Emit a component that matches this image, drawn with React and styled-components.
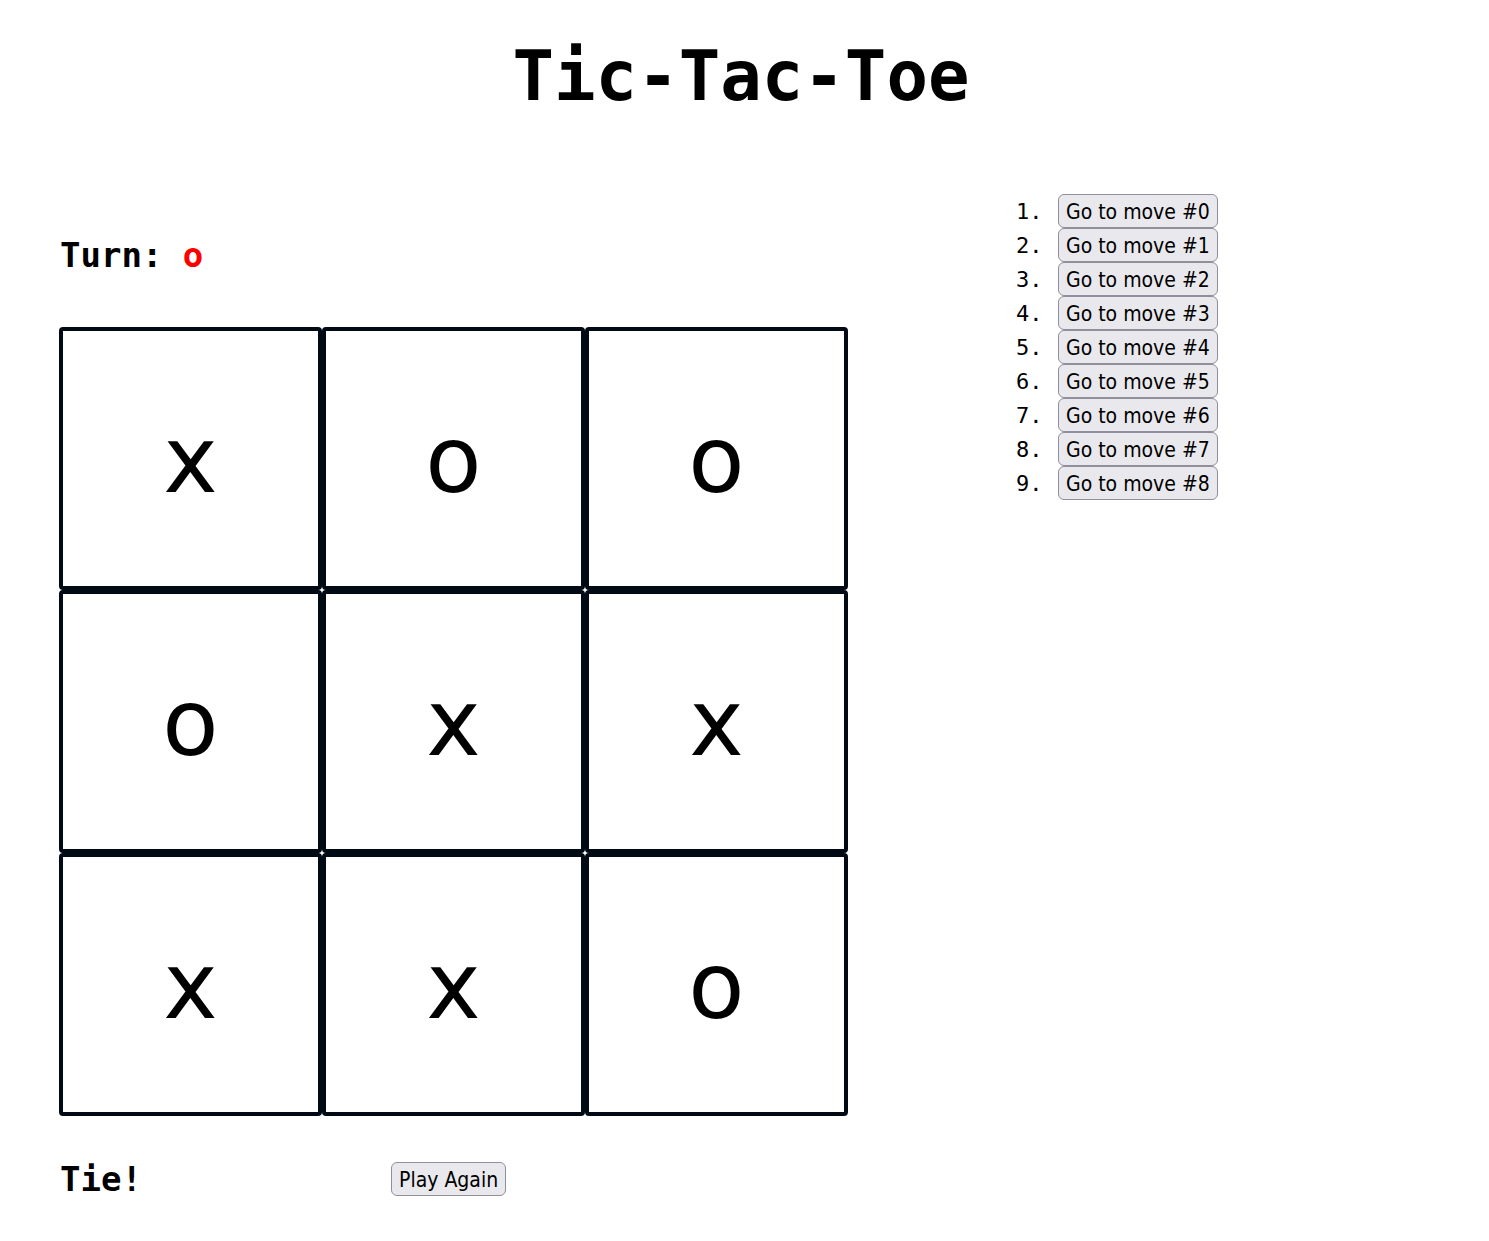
import React, { useState } from "react";
import styled, { createGlobalStyle } from "styled-components";

const GlobalStyle = createGlobalStyle`
  body {
    margin: 0;
    background: #ffffff;
    color: #000000;
    font-family: "DejaVu Sans Mono", monospace;
    font-size: 22px;
  }
`;

const Page = styled.div`
  box-sizing: border-box;
  padding: 40px 66px 44px 59px;
`;

const Title = styled.h1`
  margin: 0;
  font-size: 69px;
  line-height: 72px;
  text-align: center;
`;

const Game = styled.main`
  display: flex;
  align-items: flex-start;
  gap: 159px;
  padding-top: 82px;
`;

const Play = styled.section`
  flex: 0 1 789px;
  min-width: 0;
  padding-top: 41px;
`;

const Status = styled.h2`
  margin: 0;
  padding-left: 1px;
  font-size: 34px;
  line-height: 40px;
`;

const Player = styled.span`
  color: #ff0000;
`;

const Board = styled.div`
  display: grid;
  grid-template-columns: repeat(3, 1fr);
  margin: 52px 0 43px;
`;

const Square = styled.button`
  aspect-ratio: 1;
  min-width: 0;
  padding: 4px 0 0;
  border: 4px solid #000a14;
  border-radius: 4px;
  background: #ffffff;
  color: #000000;
  font-family: "DejaVu Sans", sans-serif;
  font-size: 92px;
  line-height: 120px;
`;

const Footer = styled.div`
  display: grid;
  grid-template-columns: 332px auto;
  justify-content: start;
  align-items: center;
`;

const Button = styled.button`
  box-sizing: border-box;
  height: 34px;
  padding: 2px 7px 0;
  border: 1px solid #8f8f9d;
  border-radius: 6px;
  background: #e9e9ed;
  color: #000000;
  font-family: "DejaVu Sans Condensed", "Noto Sans", sans-serif;
  font-size: 21px;
  line-height: 30px;
  white-space: nowrap;
`;

const Moves = styled.ol`
  margin: 0;
  padding: 0;
  list-style: none;
  counter-reset: move;
`;

const Move = styled.li`
  display: flex;
  align-items: center;
  counter-increment: move;

  &::before {
    content: counter(move) ".";
    width: 42px;
    padding-left: 9px;
  }
`;

const MARKS = ["x", "o", "o", "o", "x", "x", "x", "x", "o"];
const MOVE_COUNT = 9;

export default function App() {
  const [squares, setSquares] = useState(MARKS);

  return (
    <>
      <GlobalStyle />
      <Page>
        <Title>Tic-Tac-Toe</Title>
        <Game>
          <Play>
            <Status>
              Turn: <Player>o</Player>
            </Status>
            <Board>
              {squares.map((mark, i) => (
                <Square key={i} type="button">
                  {mark}
                </Square>
              ))}
            </Board>
            <Footer>
              <Status>Tie!</Status>
              <Button type="button" onClick={() => setSquares(Array(9).fill(""))}>
                Play Again
              </Button>
            </Footer>
          </Play>
          <Moves>
            {Array.from({ length: MOVE_COUNT }, (_, i) => (
              <Move key={i}>
                <Button type="button">Go to move #{i}</Button>
              </Move>
            ))}
          </Moves>
        </Game>
      </Page>
    </>
  );
}
